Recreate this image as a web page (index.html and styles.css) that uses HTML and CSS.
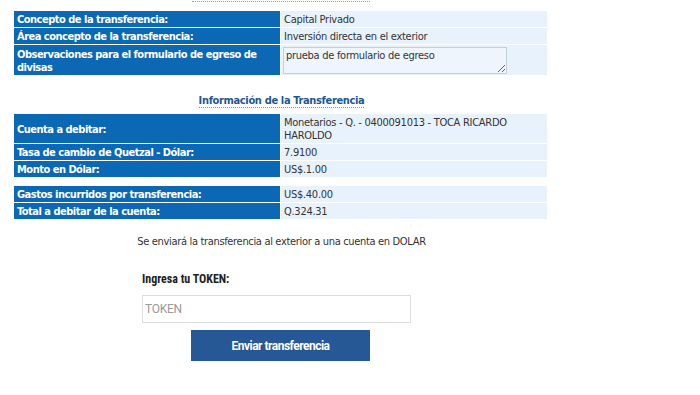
FILE: index.html
```html
<!DOCTYPE html>
<html lang="es">
<head>
<meta charset="utf-8">
<title>Transferencia al exterior</title>
<link rel="stylesheet" href="styles.css">
</head>
<body>
<div class="page">
  <div class="prev-rule"></div>

  <table class="data first">
    <tr>
      <th>Concepto de la transferencia:</th>
      <td>Capital Privado</td>
    </tr>
    <tr>
      <th>Área concepto de la transferencia:</th>
      <td>Inversión directa en el exterior</td>
    </tr>
    <tr>
      <th>Observaciones para el formulario de egreso de divisas</th>
      <td class="ta-cell"><textarea class="obs">prueba de formulario de egreso</textarea></td>
    </tr>
  </table>

  <div class="section-title"><span>Información de la Transferencia</span></div>

  <table class="data second">
    <tr>
      <th>Cuenta a debitar:</th>
      <td>Monetarios - Q. - 0400091013 - TOCA RICARDO HAROLDO</td>
    </tr>
    <tr>
      <th>Tasa de cambio de Quetzal - Dólar:</th>
      <td>7.9100</td>
    </tr>
    <tr>
      <th>Monto en Dólar:</th>
      <td>US$.1.00</td>
    </tr>
  </table>

  <table class="data third">
    <tr>
      <th>Gastos incurridos por transferencia:</th>
      <td>US$.40.00</td>
    </tr>
    <tr>
      <th>Total a debitar de la cuenta:</th>
      <td>Q.324.31</td>
    </tr>
  </table>

  <p class="notice">Se enviará la transferencia al exterior a una cuenta en DOLAR</p>

  <div class="token">
    <label class="token-label" for="token">Ingresa tu TOKEN:</label>
    <input id="token" class="token-input" type="text" placeholder="TOKEN">
  </div>
  <button class="send" type="button">Enviar transferencia</button>
</div>
</body>
</html>
```

FILE: styles.css
```css
html, body {
  margin: 0;
  padding: 0;
  background: #ffffff;
}

body {
  padding-top: 1px;
  font-family: "DejaVu Sans Condensed", "DejaVu Sans", sans-serif;
  font-stretch: condensed;
  font-size: 11px;
  color: #333333;
}

.page {
  margin-left: 14px;
  width: 535px;
}

.prev-rule {
  margin-left: 178px;
  width: 178px;
  height: 0;
  border-top: 1px dotted #7ba6d4;
}

.data {
  width: 535px;
  border-collapse: separate;
  border-spacing: 1px;
  margin-left: -1px;
  table-layout: fixed;
}

.data.first {
  margin-top: 8px;
}

.data.second {
  margin-top: 5px;
}

.data.third {
  margin-top: 7px;
}

.data th {
  width: 260px;
  background: #0a68b4;
  color: #ffffff;
  font-weight: bold;
  letter-spacing: -0.5px;
  text-align: left;
  vertical-align: middle;
  padding: 2px 3px 1px;
  line-height: 13px;
}

.data td {
  background: #e8f2fd;
  color: #333333;
  letter-spacing: -0.28px;
  text-align: left;
  vertical-align: middle;
  padding: 2px 3px 1px;
  line-height: 13px;
}

.data td.ta-cell {
  padding: 1px 2px 1px 2px;
  vertical-align: top;
}

.obs {
  display: block;
  box-sizing: border-box;
  width: 224px;
  height: 27px;
  margin: 1px 0 0;
  padding: 1px 2px;
  border: 1px solid #c9ced4;
  background: #eef5fd;
  font-family: "DejaVu Sans Condensed", "DejaVu Sans", sans-serif;
  font-stretch: condensed;
  font-size: 11px;
  letter-spacing: -0.28px;
  line-height: 13px;
  color: #333333;
}

.section-title {
  margin-top: 19px;
  text-align: center;
  line-height: 12px;
}

.section-title span {
  display: inline-block;
  font-weight: bold;
  letter-spacing: -0.35px;
  color: #1b5894;
  border-bottom: 1px dotted #6b9bd0;
}

.notice {
  margin: 15px 0 0;
  text-align: center;
  line-height: 13px;
  letter-spacing: -0.33px;
  color: #333333;
}

.token {
  margin: 24px 0 0 128px;
  width: 269px;
  display: flex;
  flex-direction: column;
}

.token-label {
  font-family: Roboto, "Liberation Sans", sans-serif;
  font-weight: bold;
  font-size: 12px;
  line-height: 14px;
  color: #222222;
}

.token-input {
  box-sizing: border-box;
  margin-top: 9px;
  width: 269px;
  height: 28px;
  padding: 0 2px;
  border: 1px solid #dcdcdc;
  background: #ffffff;
  font-family: Roboto, "Liberation Sans", sans-serif;
  font-size: 12px;
  color: #333333;
  outline: none;
}

.token-input::placeholder {
  color: #9a9a9a;
  letter-spacing: -0.3px;
}

.send {
  display: block;
  margin: 7px 0 0 177px;
  width: 179px;
  height: 31px;
  border: none;
  padding: 0;
  background: #255895;
  color: #ffffff;
  font-family: Roboto, "Liberation Sans", sans-serif;
  font-weight: bold;
  font-size: 12px;
  letter-spacing: -0.5px;
}
```
